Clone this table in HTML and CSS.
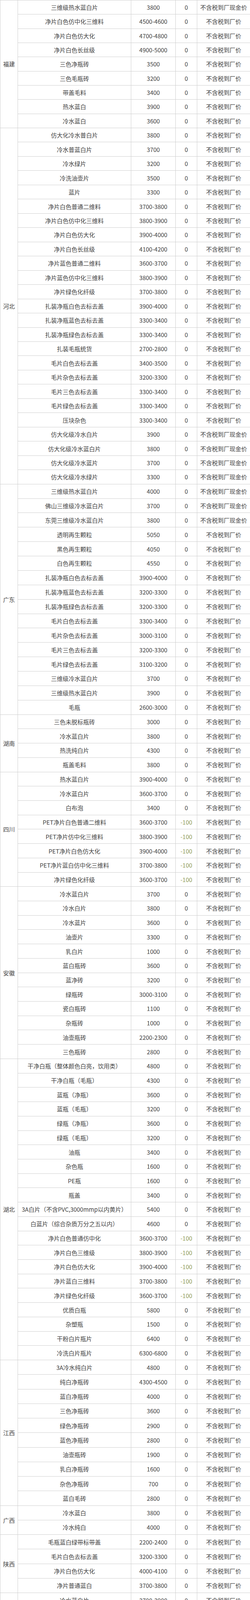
FILE: index.html
```html
<!DOCTYPE html>
<html lang="zh-CN">
<head>
<meta charset="utf-8">
<title>价格表</title>
<link rel="stylesheet" href="styles.css">
</head>
<body>
<div class="sheet">
<div class="c region span-9">福建</div>
<div class="c">三维级热水蓝白片</div><div class="c">3800</div><div class="c">0</div><div class="c">不含税到厂现金价</div>
<div class="c">净片白色仿中化三维料</div><div class="c">4500-4600</div><div class="c">0</div><div class="c">不含税到厂价</div>
<div class="c">净片白色仿大化</div><div class="c">4700-4800</div><div class="c">0</div><div class="c">不含税到厂价</div>
<div class="c">净片白色长丝级</div><div class="c">4900-5000</div><div class="c">0</div><div class="c">不含税到厂价</div>
<div class="c">三色净瓶砖</div><div class="c">3500</div><div class="c">0</div><div class="c">不含税到厂价</div>
<div class="c">三色毛瓶砖</div><div class="c">3200</div><div class="c">0</div><div class="c">不含税到厂价</div>
<div class="c">带盖毛料</div><div class="c">3400</div><div class="c">0</div><div class="c">不含税到厂价</div>
<div class="c">热水蓝白</div><div class="c">3900</div><div class="c">0</div><div class="c">不含税到厂价</div>
<div class="c">冷水蓝白</div><div class="c">3600</div><div class="c">0</div><div class="c">不含税到厂价</div>

<div class="c region span-25">河北</div>
<div class="c">仿大化冷水普白片</div><div class="c">3800</div><div class="c">0</div><div class="c">不含税到厂价</div>
<div class="c">冷水普蓝白片</div><div class="c">3700</div><div class="c">0</div><div class="c">不含税到厂价</div>
<div class="c">冷水绿片</div><div class="c">3200</div><div class="c">0</div><div class="c">不含税到厂价</div>
<div class="c">冷洗油壶片</div><div class="c">3500</div><div class="c">0</div><div class="c">不含税到厂价</div>
<div class="c">蓝片</div><div class="c">3300</div><div class="c">0</div><div class="c">不含税到厂价</div>
<div class="c">净片白色普通二维料</div><div class="c">3700-3800</div><div class="c">0</div><div class="c">不含税到厂价</div>
<div class="c">净片白色仿中化三维料</div><div class="c">3800-3900</div><div class="c">0</div><div class="c">不含税到厂价</div>
<div class="c">净片白色仿大化</div><div class="c">3900-4000</div><div class="c">0</div><div class="c">不含税到厂价</div>
<div class="c">净片白色长丝级</div><div class="c">4100-4200</div><div class="c">0</div><div class="c">不含税到厂价</div>
<div class="c">净片蓝色普通二维料</div><div class="c">3600-3700</div><div class="c">0</div><div class="c">不含税到厂价</div>
<div class="c">净片蓝色仿中化三维料</div><div class="c">3800-3900</div><div class="c">0</div><div class="c">不含税到厂价</div>
<div class="c">净片绿色化纤级</div><div class="c">3700-3800</div><div class="c">0</div><div class="c">不含税到厂价</div>
<div class="c">扎装净瓶白色去标去盖</div><div class="c">3900-4000</div><div class="c">0</div><div class="c">不含税到厂价</div>
<div class="c">扎装净瓶蓝色去标去盖</div><div class="c">3300-3400</div><div class="c">0</div><div class="c">不含税到厂价</div>
<div class="c">扎装净瓶绿色去标去盖</div><div class="c">3300-3400</div><div class="c">0</div><div class="c">不含税到厂价</div>
<div class="c">扎装毛瓶统货</div><div class="c">2700-2800</div><div class="c">0</div><div class="c">不含税到厂价</div>
<div class="c">毛片白色去标去盖</div><div class="c">3400-3500</div><div class="c">0</div><div class="c">不含税到厂价</div>
<div class="c">毛片杂色去标去盖</div><div class="c">3200-3300</div><div class="c">0</div><div class="c">不含税到厂价</div>
<div class="c">毛片三色去标去盖</div><div class="c">3300-3400</div><div class="c">0</div><div class="c">不含税到厂价</div>
<div class="c">毛片绿色去标去盖</div><div class="c">3300-3400</div><div class="c">0</div><div class="c">不含税到厂价</div>
<div class="c">压块杂色</div><div class="c">3300-3400</div><div class="c">0</div><div class="c">不含税到厂价</div>
<div class="c">仿大化级冷水白片</div><div class="c">3900</div><div class="c">0</div><div class="c">不含税到厂现金价</div>
<div class="c">仿大化级冷水蓝白片</div><div class="c">3800</div><div class="c">0</div><div class="c">不含税到厂现金价</div>
<div class="c">仿大化级冷水蓝片</div><div class="c">3700</div><div class="c">0</div><div class="c">不含税到厂现金价</div>
<div class="c">仿大化级冷水绿片</div><div class="c">3300</div><div class="c">0</div><div class="c">不含税到厂现金价</div>

<div class="c region span-16">广东</div>
<div class="c">三维级热水蓝白片</div><div class="c">4000</div><div class="c">0</div><div class="c">不含税到厂现金价</div>
<div class="c">佛山三维级冷水蓝白片</div><div class="c">3700</div><div class="c">0</div><div class="c">不含税到厂现金价</div>
<div class="c">东莞三维级冷水蓝白片</div><div class="c">3800</div><div class="c">0</div><div class="c">不含税到厂现金价</div>
<div class="c">透明再生颗粒</div><div class="c">5050</div><div class="c">0</div><div class="c">不含税到厂价</div>
<div class="c">黑色再生颗粒</div><div class="c">4050</div><div class="c">0</div><div class="c">不含税到厂价</div>
<div class="c">白色再生颗粒</div><div class="c">4550</div><div class="c">0</div><div class="c">不含税到厂价</div>
<div class="c">扎装净瓶白色去标去盖</div><div class="c">3900-4000</div><div class="c">0</div><div class="c">不含税到厂价</div>
<div class="c">扎装净瓶蓝色去标去盖</div><div class="c">3200-3300</div><div class="c">0</div><div class="c">不含税到厂价</div>
<div class="c">扎装净瓶绿色去标去盖</div><div class="c">3200-3300</div><div class="c">0</div><div class="c">不含税到厂价</div>
<div class="c">毛片白色去标去盖</div><div class="c">3300-3400</div><div class="c">0</div><div class="c">不含税到厂价</div>
<div class="c">毛片杂色去标去盖</div><div class="c">3000-3100</div><div class="c">0</div><div class="c">不含税到厂价</div>
<div class="c">毛片三色去标去盖</div><div class="c">3200-3300</div><div class="c">0</div><div class="c">不含税到厂价</div>
<div class="c">毛片绿色去标去盖</div><div class="c">3100-3200</div><div class="c">0</div><div class="c">不含税到厂价</div>
<div class="c">三维级冷水蓝白片</div><div class="c">3700</div><div class="c">0</div><div class="c">不含税到厂价</div>
<div class="c">三维级热水蓝白片</div><div class="c">3900</div><div class="c">0</div><div class="c">不含税到厂价</div>
<div class="c">毛瓶</div><div class="c">2600-3000</div><div class="c">0</div><div class="c">不含税到厂价</div>

<div class="c region span-4">湖南</div>
<div class="c">三色未脱标瓶砖</div><div class="c">3000</div><div class="c">0</div><div class="c">不含税到厂价</div>
<div class="c">冷水蓝白片</div><div class="c">3800</div><div class="c">0</div><div class="c">不含税到厂价</div>
<div class="c">热洗纯白片</div><div class="c">4300</div><div class="c">0</div><div class="c">不含税到厂价</div>
<div class="c">瓶盖毛料</div><div class="c">3800</div><div class="c">0</div><div class="c">不含税到厂价</div>

<div class="c region span-8">四川</div>
<div class="c">热水蓝白片</div><div class="c">3900-4000</div><div class="c">0</div><div class="c">不含税到厂价</div>
<div class="c">冷水蓝白片</div><div class="c">3600-3700</div><div class="c">0</div><div class="c">不含税到厂价</div>
<div class="c">白布泡</div><div class="c">3400</div><div class="c">0</div><div class="c">不含税到厂价</div>
<div class="c">PET净片白色普通二维料</div><div class="c">3600-3700</div><div class="c neg">-100</div><div class="c">不含税到厂价</div>
<div class="c">PET净片仿中化三维料</div><div class="c">3800-3900</div><div class="c neg">-100</div><div class="c">不含税到厂价</div>
<div class="c">PET净片白色仿大化</div><div class="c">3900-4000</div><div class="c neg">-100</div><div class="c">不含税到厂价</div>
<div class="c">PET净片蓝白仿中化三维料</div><div class="c">3700-3800</div><div class="c neg">-100</div><div class="c">不含税到厂价</div>
<div class="c">净片绿色化纤级</div><div class="c">3600-3700</div><div class="c neg">-100</div><div class="c">不含税到厂价</div>

<div class="c region span-12">安徽</div>
<div class="c">冷水蓝白片</div><div class="c">3700</div><div class="c">0</div><div class="c">不含税到厂价</div>
<div class="c">冷水白片</div><div class="c">3800</div><div class="c">0</div><div class="c">不含税到厂价</div>
<div class="c">冷水蓝片</div><div class="c">3600</div><div class="c">0</div><div class="c">不含税到厂价</div>
<div class="c">油壶片</div><div class="c">3300</div><div class="c">0</div><div class="c">不含税到厂价</div>
<div class="c">乳白片</div><div class="c">1000</div><div class="c">0</div><div class="c">不含税到厂价</div>
<div class="c">蓝白瓶砖</div><div class="c">3600</div><div class="c">0</div><div class="c">不含税到厂价</div>
<div class="c">蓝净砖</div><div class="c">3200</div><div class="c">0</div><div class="c">不含税到厂价</div>
<div class="c">绿瓶砖</div><div class="c">3000-3100</div><div class="c">0</div><div class="c">不含税到厂价</div>
<div class="c">瓷白瓶砖</div><div class="c">1100</div><div class="c">0</div><div class="c">不含税到厂价</div>
<div class="c">杂瓶砖</div><div class="c">1000</div><div class="c">0</div><div class="c">不含税到厂价</div>
<div class="c">油壶瓶砖</div><div class="c">2200-2300</div><div class="c">0</div><div class="c">不含税到厂价</div>
<div class="c">三色瓶砖</div><div class="c">2800</div><div class="c">0</div><div class="c">不含税到厂价</div>

<div class="c region span-21">湖北</div>
<div class="c">干净白瓶（整体颜色白亮，饮用类）</div><div class="c">4800</div><div class="c">0</div><div class="c">不含税到厂价</div>
<div class="c">干净白瓶（毛瓶）</div><div class="c">4300</div><div class="c">0</div><div class="c">不含税到厂价</div>
<div class="c">蓝瓶（净瓶）</div><div class="c">3600</div><div class="c">0</div><div class="c">不含税到厂价</div>
<div class="c">蓝瓶（毛瓶）</div><div class="c">3200</div><div class="c">0</div><div class="c">不含税到厂价</div>
<div class="c">绿瓶（净瓶）</div><div class="c">3600</div><div class="c">0</div><div class="c">不含税到厂价</div>
<div class="c">绿瓶（毛瓶）</div><div class="c">3200</div><div class="c">0</div><div class="c">不含税到厂价</div>
<div class="c">油瓶</div><div class="c">3400</div><div class="c">0</div><div class="c">不含税到厂价</div>
<div class="c">杂色瓶</div><div class="c">1600</div><div class="c">0</div><div class="c">不含税到厂价</div>
<div class="c">PE瓶</div><div class="c">1600</div><div class="c">0</div><div class="c">不含税到厂价</div>
<div class="c">瓶盖</div><div class="c">3400</div><div class="c">0</div><div class="c">不含税到厂价</div>
<div class="c">3A白片（不含PVC,3000mmp以内黄片）</div><div class="c">5400</div><div class="c">0</div><div class="c">不含税到厂价</div>
<div class="c">白蓝片（综合杂质万分之五以内）</div><div class="c">4600</div><div class="c">0</div><div class="c">不含税到厂价</div>
<div class="c">净片白色普通仿中化</div><div class="c">3600-3700</div><div class="c neg">-100</div><div class="c">不含税到厂价</div>
<div class="c">净片白色三维级</div><div class="c">3800-3900</div><div class="c neg">-100</div><div class="c">不含税到厂价</div>
<div class="c">净片白色仿大化</div><div class="c">3900-4000</div><div class="c neg">-100</div><div class="c">不含税到厂价</div>
<div class="c">净片蓝白三维料</div><div class="c">3700-3800</div><div class="c neg">-100</div><div class="c">不含税到厂价</div>
<div class="c">净片绿色化纤级</div><div class="c">3600-3700</div><div class="c neg">-100</div><div class="c">不含税到厂价</div>
<div class="c">优质白瓶</div><div class="c">5800</div><div class="c">0</div><div class="c">不含税到厂价</div>
<div class="c">杂塑瓶</div><div class="c">1500</div><div class="c">0</div><div class="c">不含税到厂价</div>
<div class="c">干粉白片瓶片</div><div class="c">6400</div><div class="c">0</div><div class="c">不含税到厂价</div>
<div class="c">冷洗白片瓶片</div><div class="c">6300-6800</div><div class="c">0</div><div class="c">不含税到厂价</div>

<div class="c region span-10">江西</div>
<div class="c">3A冷水纯白片</div><div class="c">4800</div><div class="c">0</div><div class="c">不含税到厂价</div>
<div class="c">纯白净瓶砖</div><div class="c">4300-4500</div><div class="c">0</div><div class="c">不含税到厂价</div>
<div class="c">蓝白净瓶砖</div><div class="c">4000</div><div class="c">0</div><div class="c">不含税到厂价</div>
<div class="c">三色净瓶砖</div><div class="c">3600</div><div class="c">0</div><div class="c">不含税到厂价</div>
<div class="c">绿色净瓶砖</div><div class="c">2900</div><div class="c">0</div><div class="c">不含税到厂价</div>
<div class="c">蓝色净瓶砖</div><div class="c">2800</div><div class="c">0</div><div class="c">不含税到厂价</div>
<div class="c">油壶瓶砖</div><div class="c">1900</div><div class="c">0</div><div class="c">不含税到厂价</div>
<div class="c">乳白净瓶砖</div><div class="c">1600</div><div class="c">0</div><div class="c">不含税到厂价</div>
<div class="c">杂色净瓶砖</div><div class="c">700</div><div class="c">0</div><div class="c">不含税到厂价</div>
<div class="c">蓝白毛砖</div><div class="c">2800</div><div class="c">0</div><div class="c">不含税到厂价</div>

<div class="c region span-2">广西</div>
<div class="c">冷水蓝白</div><div class="c">3800</div><div class="c">0</div><div class="c">不含税到厂价</div>
<div class="c">冷水纯白</div><div class="c">4000</div><div class="c">0</div><div class="c">不含税到厂价</div>

<div class="c region span-4">陕西</div>
<div class="c">毛瓶蓝白绿带标带盖</div><div class="c">2200-2400</div><div class="c">0</div><div class="c">不含税到厂价</div>
<div class="c">毛片白色去标去盖</div><div class="c">3200-3300</div><div class="c">0</div><div class="c">不含税到厂价</div>
<div class="c">净片白色仿大化</div><div class="c">4000-4100</div><div class="c">0</div><div class="c">不含税到厂价</div>
<div class="c">净片普通蓝白</div><div class="c">3700-3800</div><div class="c">0</div><div class="c">不含税到厂价</div>

<div class="c region span-6">辽宁</div>
<div class="c">冷水蓝白片</div><div class="c">3700-3900</div><div class="c">0</div><div class="c">不含税到厂价</div>
<div class="c">3A冷水白片</div><div class="c">4400-5000</div><div class="c">0</div><div class="c">不含税到厂价</div>
<div class="c">蓝片</div><div class="c">3250</div><div class="c">0</div><div class="c">不含税到厂价</div>
<div class="c">绿片</div><div class="c">3300</div><div class="c">0</div><div class="c">不含税到厂价</div>
<div class="c">油壶片</div><div class="c">3500</div><div class="c">0</div><div class="c">不含税到厂价</div>
<div class="c">瓶盖毛料</div><div class="c">4000</div><div class="c">0</div><div class="c">不含税到厂价</div>
</div>
</body>
</html>
```

FILE: styles.css
```css
html, body {
  margin: 0;
  padding: 0;
  background: #ffffff;
}

body {
  font-family: "Liberation Sans Narrow", "Noto Sans CJK SC", sans-serif;
  font-size: 15px;
  color: #424242;
  overflow: hidden;
}

.sheet {
  display: grid;
  box-sizing: border-box;
  width: 640px;
  height: 4287px;
  overflow: hidden;
  grid-template-columns: 45px 290px 114px 55px 136px;
  grid-template-rows:
    repeat(9, 36.33px)
    repeat(25, 36.48px)
    repeat(16, 36.875px)
    repeat(45, 36.73px)
    repeat(22, 37.25px);
  border-top: 1px solid #cfcfcf;
}

.c {
  box-sizing: border-box;
  display: flex;
  align-items: center;
  justify-content: center;
  border-left: 1px solid #cfcfcf;
  border-bottom: 1px solid #cfcfcf;
  white-space: nowrap;
  line-height: 1;
  min-width: 0;
}

.region {
  grid-column: 1;
}

.span-2 { grid-row: span 2; }
.span-4 { grid-row: span 4; }
.span-6 { grid-row: span 6; }
.span-8 { grid-row: span 8; }
.span-9 { grid-row: span 9; }
.span-10 { grid-row: span 10; }
.span-12 { grid-row: span 12; }
.span-16 { grid-row: span 16; }
.span-21 { grid-row: span 21; }
.span-25 { grid-row: span 25; }

.neg {
  color: #8f9a58;
}
```
